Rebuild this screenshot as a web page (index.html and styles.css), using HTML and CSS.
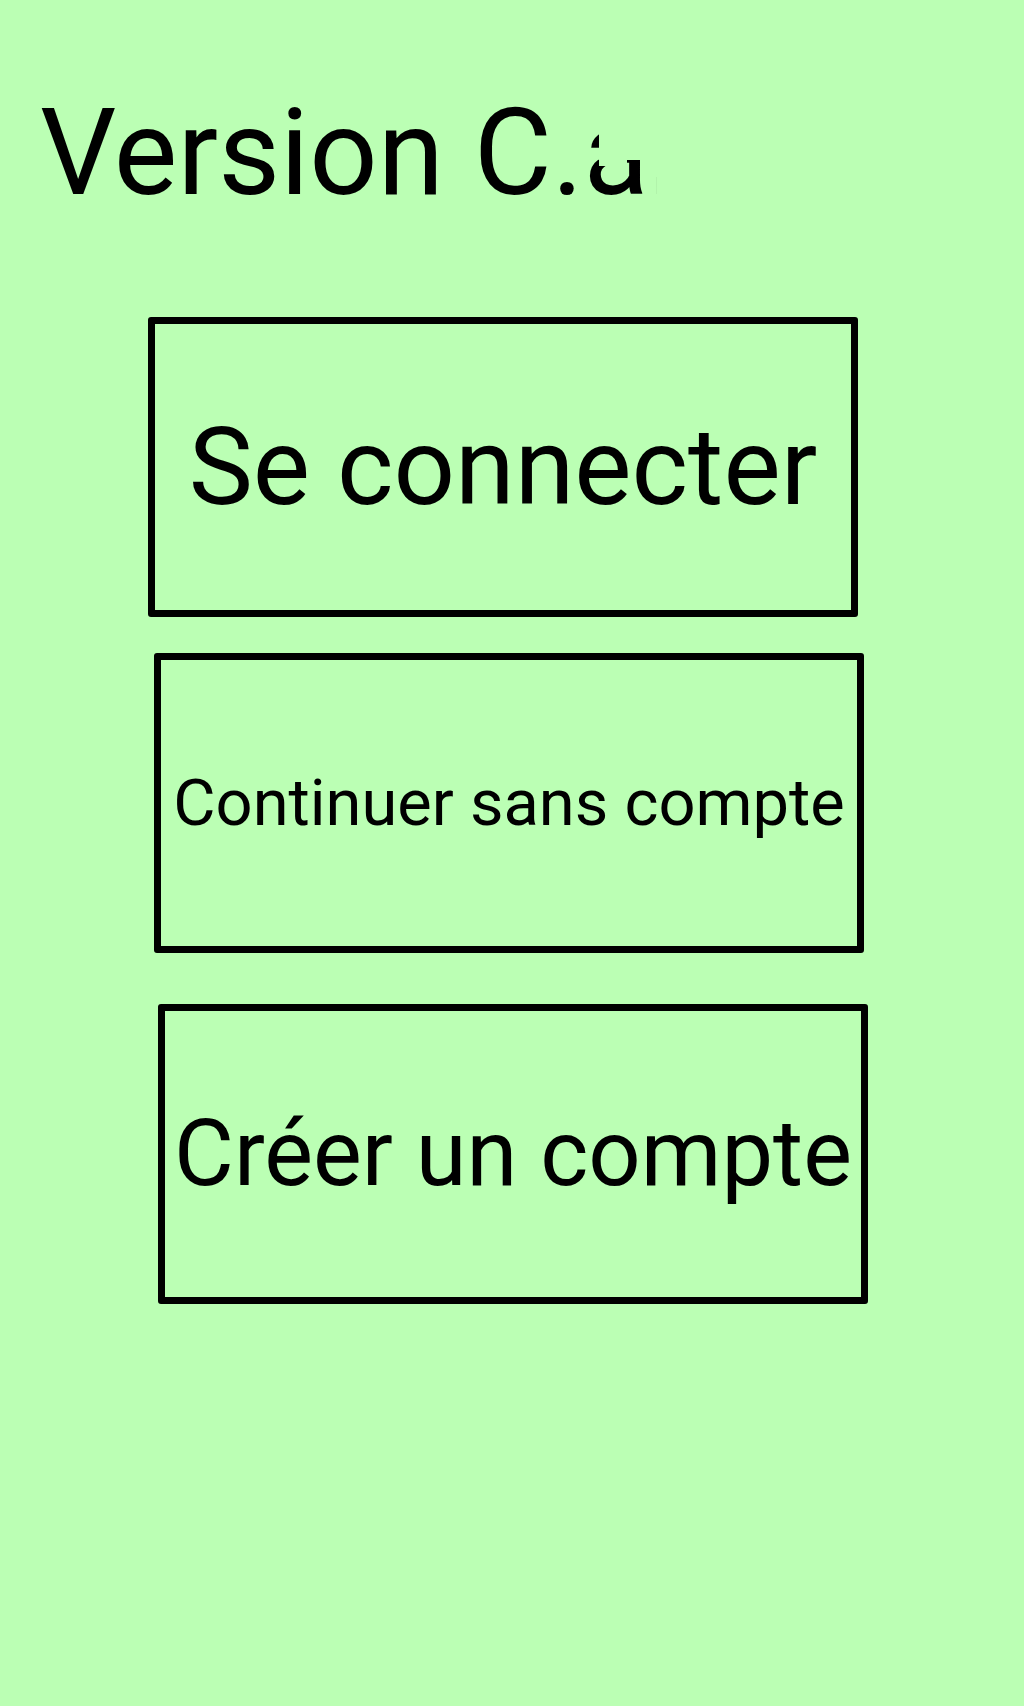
FILE: index.html
```html
<!DOCTYPE html>
<html lang="fr">
<head>
<meta charset="utf-8">
<title>Version</title>
<link rel="stylesheet" href="styles.css">
</head>
<body>
<div class="screen">
  <div class="title-wrap">
    <h1 class="title">Version C.ab</h1>
    <span class="patch patch-a"></span>
    <span class="patch patch-c"></span>
    <span class="patch patch-b"></span>
  </div>
  <div class="actions">
    <button class="btn btn-login"><span class="label label-lg">Se connecter</span></button>
    <button class="btn btn-guest"><span class="label label-sm">Continuer sans compte</span></button>
    <button class="btn btn-create"><span class="label label-md">Créer un compte</span></button>
  </div>
</div>
</body>
</html>
```

FILE: styles.css
```css
html, body {
  margin: 0;
  padding: 0;
  background: #bbffb4;
}

.screen {
  width: 1024px;
  min-height: 1706px;
  background: #bbffb4;
  font-family: Roboto, "Liberation Sans", sans-serif;
  color: #000;
}

.title-wrap {
  position: relative;
  width: 657px;
  padding-top: 83px;
  overflow: hidden;
}

.title {
  margin: 0;
  padding-left: 40px;
  font-size: 120px;
  font-weight: 400;
  line-height: normal;
  white-space: nowrap;
}

.patch {
  position: absolute;
  z-index: 2;
  display: block;
  background: #bbffb4;
}

.patch-a {
  left: 599px;
  top: 110px;
  width: 28px;
  height: 56px;
}

.patch-c {
  left: 627px;
  top: 110px;
  width: 17px;
  height: 50px;
}

.patch-b {
  left: 644px;
  top: 90px;
  width: 20px;
  height: 87px;
}

.actions {
  display: flex;
  flex-direction: column;
  align-items: flex-start;
  margin-top: 94px;
}

.btn {
  box-sizing: border-box;
  width: 710px;
  height: 300px;
  border: 7px solid #000;
  border-radius: 3px;
  background: transparent;
  padding: 0;
  display: flex;
  align-items: center;
  justify-content: center;
  font-family: Roboto, "Liberation Sans", sans-serif;
  color: #000;
  white-space: nowrap;
}

.btn-login {
  margin-left: 148px;
}

.btn-guest {
  margin-left: 154px;
  margin-top: 36px;
}

.btn-create {
  margin-left: 158px;
  margin-top: 51px;
}

.label {
  font-weight: 400;
  line-height: 1;
}

.label-lg {
  font-size: 108px;
}

.label-sm {
  font-size: 65px;
}

.label-md {
  font-size: 92px;
}
```
